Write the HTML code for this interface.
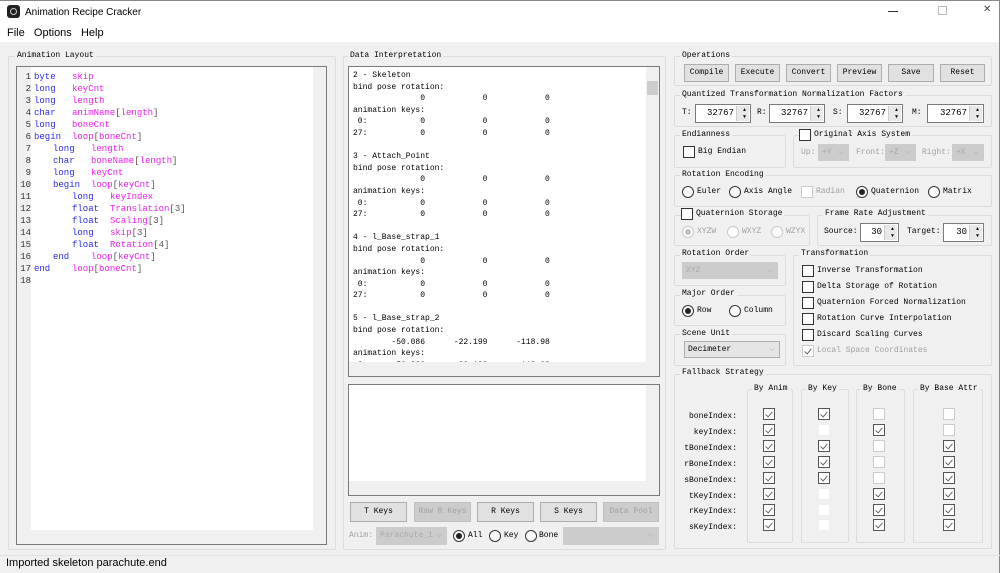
<!DOCTYPE html>
<html><head><meta charset="utf-8">
<style>
*{box-sizing:border-box;margin:0;padding:0}
body{width:1000px;height:573px;background:#f0f0f0;position:relative;overflow:hidden;font-family:"Liberation Mono",monospace;font-size:8px;color:#000}
.a{position:absolute}
.gb{position:absolute;border:1px solid #dcdcdc;border-radius:2px}
.gl{position:absolute;background:#f0f0f0;padding:0 2px;font-size:8px;line-height:10px;white-space:pre}
.btn{position:absolute;height:18px;border:1px solid #adadad;background:#e1e1e1;text-align:center;line-height:16px;font-size:8px}
.dis{color:#a0a0a0;background:#cccccc;border-color:#bfbfbf}
.box{position:absolute;background:#fff;border:1px solid #7a7a7a}
.cb{position:absolute;width:12px;height:12px;border:1px solid #333;background:#fff}
.cbl{position:absolute;width:12px;height:12px;border:1px solid #ccc;background:#fff}
.rd{position:absolute;width:12px;height:12px;border:1px solid #333;border-radius:50%;background:#fff}
.rd.on::after{content:"";position:absolute;left:2px;top:2px;width:6px;height:6px;border-radius:50%;background:#222}
.rd.d{border-color:#c8c8c8}
.rd.d.on::after{background:#c0c0c0}
.t{position:absolute;white-space:pre;line-height:10px}
.gr{color:#a0a0a0}
.chk::after{content:"";position:absolute;left:3px;top:1px;width:3px;height:6px;border:solid #666;border-width:0 1px 1px 0;transform:rotate(40deg)}
.spin{position:absolute;height:19px;background:#fff;border:1px solid #7a7a7a;font-size:9px;text-align:right;line-height:17px;padding-right:16px}
.spin::after{content:"";position:absolute;right:1px;top:1px;width:12px;height:15px;background:#e8e8e8;border-left:1px solid #ccc}
.spin i{position:absolute;right:4px;font-style:normal;font-size:5px;line-height:5px;z-index:1;color:#000}
.combo{position:absolute;height:17px;border:1px solid #ccc;background:#cccccc;color:#a8a8a8;font-size:8px;line-height:15px;padding-left:3px}
.combo::after{content:"⌵";position:absolute;right:4px;top:-1px;color:#aaa;font-family:"DejaVu Sans";font-size:8px}
.code{position:absolute;left:17px;top:71px;font-size:9px;line-height:12px}
.code div{height:12px;white-space:nowrap}
.n{display:inline-block;width:14px;text-align:right;color:#333;margin-right:3px}
.k{display:inline-block;width:38px;color:#2a2ae8}
.v{color:#ee22ee}
.p{color:#555}
.sb{position:absolute;background:#f0f0f0}
</style></head><body>
<!-- title bar -->
<div class="a" style="left:0;top:0;width:1000px;height:42px;background:#fff;border-top:1px solid #888;border-right:1px solid #888"></div>
<div class="a" style="left:7px;top:5px;width:13px;height:13px;background:#222;border-radius:3px"></div>
<div class="a" style="left:10px;top:8px;width:7px;height:7px;border:1.5px solid #ccc;border-radius:50%"></div>
<div class="a" style="left:25px;top:6px;font-family:'Liberation Sans',sans-serif;font-size:10px;line-height:13px">Animation Recipe Cracker</div>
<div class="a" style="left:888px;top:11px;width:10px;height:1px;background:#333"></div>
<div class="a" style="left:938px;top:6px;width:9px;height:9px;border:1px solid #bbb"></div>
<div class="a" style="left:983px;top:4px;font-family:'DejaVu Sans';font-size:10px;color:#444">✕</div>
<div class="a" style="left:7px;top:27px;font-family:'Liberation Sans',sans-serif;font-size:11px;line-height:13px">File&nbsp;&nbsp;&nbsp;Options&nbsp;&nbsp;&nbsp;Help</div>
<div class="a" style="left:999px;top:42px;width:1px;height:531px;background:#888"></div>

<!-- LEFT -->
<div class="gb" style="left:8px;top:56px;width:328px;height:494px"></div>
<div class="gl" style="left:15px;top:51px">Animation Layout</div>
<div class="box" style="left:16px;top:66px;width:311px;height:479px"></div>
<div class="sb" style="left:17px;top:67px;width:14px;height:463px"></div>
<div class="sb" style="left:313px;top:67px;width:13px;height:463px"></div>
<div class="sb" style="left:17px;top:530px;width:309px;height:14px"></div>
<div class="code">
<div><span class="n">1</span><span class="k">byte</span><span class="v">skip</span></div>
<div><span class="n">2</span><span class="k">long</span><span class="v">keyCnt</span></div>
<div><span class="n">3</span><span class="k">long</span><span class="v">length</span></div>
<div><span class="n">4</span><span class="k">char</span><span class="v">animName</span><span class="p">[</span><span class="v">length</span><span class="p">]</span></div>
<div><span class="n">5</span><span class="k">long</span><span class="v">boneCnt</span></div>
<div><span class="n">6</span><span class="k">begin</span><span class="v">loop</span><span class="p">[</span><span class="v">boneCnt</span><span class="p">]</span></div>
<div><span class="n">7</span><span style="margin-left:19px" class="k">long</span><span class="v">length</span></div>
<div><span class="n">8</span><span style="margin-left:19px" class="k">char</span><span class="v">boneName</span><span class="p">[</span><span class="v">length</span><span class="p">]</span></div>
<div><span class="n">9</span><span style="margin-left:19px" class="k">long</span><span class="v">keyCnt</span></div>
<div><span class="n">10</span><span style="margin-left:19px" class="k">begin</span><span class="v">loop</span><span class="p">[</span><span class="v">keyCnt</span><span class="p">]</span></div>
<div><span class="n">11</span><span style="margin-left:38px" class="k">long</span><span class="v">keyIndex</span></div>
<div><span class="n">12</span><span style="margin-left:38px" class="k">float</span><span class="v">Translation</span><span class="p">[3]</span></div>
<div><span class="n">13</span><span style="margin-left:38px" class="k">float</span><span class="v">Scaling</span><span class="p">[3]</span></div>
<div><span class="n">14</span><span style="margin-left:38px" class="k">long</span><span class="v">skip</span><span class="p">[3]</span></div>
<div><span class="n">15</span><span style="margin-left:38px" class="k">float</span><span class="v">Rotation</span><span class="p">[4]</span></div>
<div><span class="n">16</span><span style="margin-left:19px" class="k">end</span><span class="v">loop</span><span class="p">[</span><span class="v">keyCnt</span><span class="p">]</span></div>
<div><span class="n">17</span><span class="k">end</span><span class="v">loop</span><span class="p">[</span><span class="v">boneCnt</span><span class="p">]</span></div>
<div><span class="n">18</span></div>
</div>

<!-- MIDDLE -->
<div class="gb" style="left:343px;top:56px;width:323px;height:494px"></div>
<div class="gl" style="left:348px;top:51px">Data Interpretation</div>
<div class="box" style="left:348px;top:66px;width:312px;height:311px;overflow:hidden">
<pre style="position:absolute;left:4px;top:3px;font-family:'Liberation Mono',monospace;font-size:8px;line-height:11.6px">2 - Skeleton
bind pose rotation:
              0            0            0
animation keys:
 0:           0            0            0
27:           0            0            0

3 - Attach_Point
bind pose rotation:
              0            0            0
animation keys:
 0:           0            0            0
27:           0            0            0

4 - l_Base_strap_1
bind pose rotation:
              0            0            0
animation keys:
 0:           0            0            0
27:           0            0            0

5 - l_Base_strap_2
bind pose rotation:
        -50.086      -22.199      -118.98
animation keys:
 0:     -50.086      -22.199      -118.98
 1:     -50.086      -22.199      -118.98</pre>
<div class="sb" style="left:297px;top:0;width:13px;height:295px"></div>
<div class="a" style="left:298px;top:14px;width:11px;height:14px;background:#cdcdcd"></div>
<div class="sb" style="left:0;top:295px;width:310px;height:14px"></div>
</div>
<div class="box" style="left:348px;top:384px;width:312px;height:112px;overflow:hidden">
<div class="sb" style="left:297px;top:0;width:13px;height:96px"></div>
<div class="sb" style="left:0;top:96px;width:310px;height:14px"></div>
</div>
<div class="btn" style="left:350px;top:502px;width:57px;height:20px;line-height:18px">T Keys</div>
<div class="btn dis" style="left:414px;top:502px;width:57px;height:20px;line-height:18px">Raw R Keys</div>
<div class="btn" style="left:477px;top:502px;width:57px;height:20px;line-height:18px">R Keys</div>
<div class="btn" style="left:540px;top:502px;width:57px;height:20px;line-height:18px">S Keys</div>
<div class="btn dis" style="left:603px;top:502px;width:56px;height:20px;line-height:18px">Data Pool</div>
<div class="t gr" style="left:349px;top:531px">Anim:</div>
<div class="combo" style="left:376px;top:527px;width:71px;height:18px">Parachute_1</div>
<div class="rd on" style="left:453px;top:530px"></div><div class="t" style="left:468px;top:531px">All</div>
<div class="rd" style="left:489px;top:530px"></div><div class="t" style="left:504px;top:531px">Key</div>
<div class="rd" style="left:525px;top:530px"></div><div class="t" style="left:539px;top:531px">Bone</div>
<div class="combo" style="left:563px;top:527px;width:96px;height:18px"></div>

<!-- RIGHT -->
<div class="gb" style="left:674px;top:56px;width:318px;height:30px"></div>
<div class="gl" style="left:680px;top:51px">Operations</div>
<div class="btn" style="left:684px;top:64px;width:45px">Compile</div>
<div class="btn" style="left:735px;top:64px;width:45px">Execute</div>
<div class="btn" style="left:786px;top:64px;width:45px">Convert</div>
<div class="btn" style="left:837px;top:64px;width:45px">Preview</div>
<div class="btn" style="left:888px;top:64px;width:46px">Save</div>
<div class="btn" style="left:940px;top:64px;width:45px">Reset</div>

<div class="gb" style="left:674px;top:95px;width:318px;height:32px"></div>
<div class="gl" style="left:680px;top:90px">Quantized Transformation Normalization Factors</div>
<div class="t" style="left:682px;top:108px">T:</div><div class="spin" style="left:695px;top:104px;width:56px"><i style="top:3px">▲</i><i style="top:10px">▼</i>32767</div>
<div class="t" style="left:757px;top:108px">R:</div><div class="spin" style="left:769px;top:104px;width:56px"><i style="top:3px">▲</i><i style="top:10px">▼</i>32767</div>
<div class="t" style="left:833px;top:108px">S:</div><div class="spin" style="left:847px;top:104px;width:56px"><i style="top:3px">▲</i><i style="top:10px">▼</i>32767</div>
<div class="t" style="left:912px;top:108px">M:</div><div class="spin" style="left:927px;top:104px;width:57px"><i style="top:3px">▲</i><i style="top:10px">▼</i>32767</div>

<div class="gb" style="left:674px;top:135px;width:112px;height:33px"></div>
<div class="gl" style="left:680px;top:130px">Endianness</div>
<div class="cb" style="left:683px;top:146px"></div><div class="t" style="left:698px;top:147px">Big Endian</div>
<div class="gb" style="left:793px;top:135px;width:199px;height:33px"></div>
<div class="cb" style="left:799px;top:129px"></div><div class="gl" style="left:812px;top:130px">Original Axis System</div>
<div class="t gr" style="left:801px;top:148px">Up:</div><div class="combo" style="left:818px;top:144px;width:31px">+Y</div>
<div class="t gr" style="left:856px;top:148px">Front:</div><div class="combo" style="left:885px;top:144px;width:31px">+Z</div>
<div class="t gr" style="left:922px;top:148px">Right:</div><div class="combo" style="left:952px;top:144px;width:32px">+X</div>

<div class="gb" style="left:674px;top:175px;width:318px;height:32px"></div>
<div class="gl" style="left:680px;top:170px">Rotation Encoding</div>
<div class="rd" style="left:682px;top:186px"></div><div class="t" style="left:697px;top:187px">Euler</div>
<div class="rd" style="left:729px;top:186px"></div><div class="t" style="left:744px;top:187px">Axis Angle</div>
<div class="cbl" style="left:801px;top:186px"></div><div class="t gr" style="left:816px;top:187px">Radian</div>
<div class="rd on" style="left:856px;top:186px"></div><div class="t" style="left:871px;top:187px">Quaternion</div>
<div class="rd" style="left:928px;top:186px"></div><div class="t" style="left:943px;top:187px">Matrix</div>

<div class="gb" style="left:674px;top:215px;width:136px;height:31px"></div>
<div class="cb" style="left:681px;top:208px"></div><div class="gl" style="left:694px;top:209px">Quaternion Storage</div>
<div class="rd d on" style="left:682px;top:226px"></div><div class="t gr" style="left:697px;top:227px">XYZW</div>
<div class="rd d" style="left:727px;top:226px"></div><div class="t gr" style="left:742px;top:227px">WXYZ</div>
<div class="rd d" style="left:771px;top:226px"></div><div class="t gr" style="left:786px;top:227px">WZYX</div>
<div class="gb" style="left:817px;top:215px;width:175px;height:31px"></div>
<div class="gl" style="left:823px;top:209px">Frame Rate Adjustment</div>
<div class="t" style="left:824px;top:227px">Source:</div><div class="spin" style="left:860px;top:223px;width:39px"><i style="top:3px">▲</i><i style="top:10px">▼</i>30</div>
<div class="t" style="left:907px;top:227px">Target:</div><div class="spin" style="left:943px;top:223px;width:41px"><i style="top:3px">▲</i><i style="top:10px">▼</i>30</div>

<div class="gb" style="left:674px;top:255px;width:112px;height:31px"></div>
<div class="gl" style="left:680px;top:249px">Rotation Order</div>
<div class="combo" style="left:682px;top:262px;width:96px">XYZ</div>
<div class="gb" style="left:674px;top:295px;width:112px;height:31px"></div>
<div class="gl" style="left:680px;top:289px">Major Order</div>
<div class="rd on" style="left:682px;top:305px"></div><div class="t" style="left:697px;top:306px">Row</div>
<div class="rd" style="left:729px;top:305px"></div><div class="t" style="left:744px;top:306px">Column</div>
<div class="gb" style="left:674px;top:334px;width:112px;height:32px"></div>
<div class="gl" style="left:680px;top:329px">Scene Unit</div>
<div class="combo" style="left:684px;top:341px;width:96px;background:#e5e5e5;border-color:#adadad;color:#000">Decimeter</div>

<div class="gb" style="left:793px;top:255px;width:199px;height:111px"></div>
<div class="gl" style="left:799px;top:249px">Transformation</div>
<div class="cb" style="left:802px;top:265px"></div><div class="t" style="left:817px;top:266px">Inverse Transformation</div>
<div class="cb" style="left:802px;top:281px"></div><div class="t" style="left:817px;top:282px">Delta Storage of Rotation</div>
<div class="cb" style="left:802px;top:297px"></div><div class="t" style="left:817px;top:298px">Quaternion Forced Normalization</div>
<div class="cb" style="left:802px;top:313px"></div><div class="t" style="left:817px;top:314px">Rotation Curve Interpolation</div>
<div class="cb" style="left:802px;top:329px"></div><div class="t" style="left:817px;top:330px">Discard Scaling Curves</div>
<div class="cbl chk" style="left:802px;top:345px"></div><div class="t gr" style="left:817px;top:346px">Local Space Coordinates</div>

<div class="gb" style="left:674px;top:374px;width:318px;height:175px"></div>
<div class="gl" style="left:680px;top:368px">Fallback Strategy</div>
<div class="gb" style="left:747px;top:389px;width:46px;height:154px"></div><div class="gl" style="left:752px;top:384px">By Anim</div>
<div class="gb" style="left:801px;top:389px;width:48px;height:154px"></div><div class="gl" style="left:806px;top:384px">By Key</div>
<div class="gb" style="left:856px;top:389px;width:49px;height:154px"></div><div class="gl" style="left:861px;top:384px">By Bone</div>
<div class="gb" style="left:913px;top:389px;width:70px;height:154px"></div><div class="gl" style="left:918px;top:384px">By Base Attr</div>

<div class="t" style="left:660px;top:409px;width:77px;text-align:right;line-height:15.9px">boneIndex:
keyIndex:
tBoneIndex:
rBoneIndex:
sBoneIndex:
tKeyIndex:
rKeyIndex:
sKeyIndex:</div>

<div class="cb chk" style="left:763px;top:408px;border-color:#555"></div><div class="cb chk" style="left:818px;top:408px;border-color:#555"></div><div class="cbl" style="left:873px;top:408px"></div><div class="cbl" style="left:943px;top:408px"></div>
<div class="cb chk" style="left:763px;top:424px;border-color:#555"></div><div class="cbl" style="left:818px;top:424px;border-color:#eee"></div><div class="cb chk" style="left:873px;top:424px;border-color:#555"></div><div class="cbl" style="left:943px;top:424px"></div>
<div class="cb chk" style="left:763px;top:440px;border-color:#555"></div><div class="cb chk" style="left:818px;top:440px;border-color:#555"></div><div class="cbl" style="left:873px;top:440px"></div><div class="cb chk" style="left:943px;top:440px;border-color:#555"></div>
<div class="cb chk" style="left:763px;top:456px;border-color:#555"></div><div class="cb chk" style="left:818px;top:456px;border-color:#555"></div><div class="cbl" style="left:873px;top:456px"></div><div class="cb chk" style="left:943px;top:456px;border-color:#555"></div>
<div class="cb chk" style="left:763px;top:472px;border-color:#555"></div><div class="cb chk" style="left:818px;top:472px;border-color:#555"></div><div class="cbl" style="left:873px;top:472px"></div><div class="cb chk" style="left:943px;top:472px;border-color:#555"></div>
<div class="cb chk" style="left:763px;top:488px;border-color:#555"></div><div class="cbl" style="left:818px;top:488px;border-color:#eee"></div><div class="cb chk" style="left:873px;top:488px;border-color:#555"></div><div class="cb chk" style="left:943px;top:488px;border-color:#555"></div>
<div class="cb chk" style="left:763px;top:504px;border-color:#555"></div><div class="cbl" style="left:818px;top:504px;border-color:#eee"></div><div class="cb chk" style="left:873px;top:504px;border-color:#555"></div><div class="cb chk" style="left:943px;top:504px;border-color:#555"></div>
<div class="cb chk" style="left:763px;top:519px;border-color:#555"></div><div class="cbl" style="left:818px;top:519px;border-color:#eee"></div><div class="cb chk" style="left:873px;top:519px;border-color:#555"></div><div class="cb chk" style="left:943px;top:519px;border-color:#555"></div>

<div class="a" style="left:0;top:555px;width:1000px;height:1px;background:#e0e0e0"></div>
<div class="a" style="left:6px;top:557px;font-family:'Liberation Sans',sans-serif;font-size:11px;line-height:13px">Imported skeleton parachute.end</div>
</body></html>
